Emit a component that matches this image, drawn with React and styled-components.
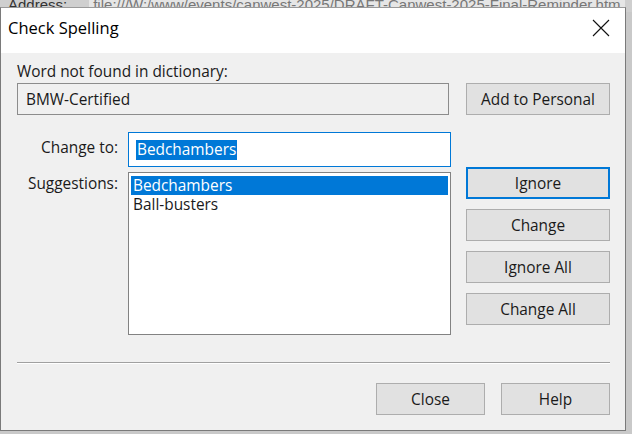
import React from "react";
import styled, { createGlobalStyle } from "styled-components";

const Global = createGlobalStyle`
  html, body { margin: 0; padding: 0; }
  body { width: 632px; height: 434px; overflow: hidden; background: #bdbdbd; font-family: "Noto Sans", "Open Sans", sans-serif; }
`;

const Desktop = styled.div`
  position: relative;
  width: 632px;
  height: 434px;
  overflow: hidden;
  background: #c9c9c9;
`;

const AddressBar = styled.div`
  display: flex;
  align-items: flex-end;
  gap: 22px;
  height: 12px;
  padding-left: 8px;
  background: #cfcfcf;
  overflow: hidden;
  font-family: "Liberation Sans", Arial, sans-serif;
  font-size: 15px;
  line-height: 15px;
  color: #333;
  white-space: nowrap;
`;

const AddressValue = styled.span`
  background: #e6e6e6;
  color: #777;
  padding: 0 4px;
`;

const Dialog = styled.div`
  position: absolute;
  left: 0;
  top: 7px;
  width: 626px;
  height: 424px;
  display: flex;
  flex-direction: column;
  background: #f0f0f0;
  border: 1px solid #7a7a7a;
  border-top-color: #9a9a9a;
  box-sizing: border-box;
  font-family: "Open Sans", "Noto Sans", sans-serif;
  font-size: 15.4px;
  color: #1a1a1a;
`;

const TitleBar = styled.div`
  display: flex;
  align-items: center;
  justify-content: space-between;
  height: 45px;
  padding: 0 15px 0 7px;
  background: #ffffff;
`;

const Title = styled.div`
  font-size: 16.5px;
  color: #000;
  padding-bottom: 6px;
`;

const CloseX = styled.svg`
  width: 18px;
  height: 18px;
  margin-bottom: 6px;
`;

const Body = styled.div`
  flex: 1;
  display: flex;
  flex-direction: column;
  padding: 10px 15px 0 16px;
`;

const Label = styled.div`
  line-height: 18px;
  color: #1a1a1a;
`;

const Row = styled.div`
  display: flex;
  align-items: ${(p) => p.$align || "center"};
  justify-content: space-between;
  margin-top: ${(p) => p.$mt || 0}px;
`;

const ReadOnlyBox = styled.div`
  width: 432px;
  height: 32px;
  box-sizing: border-box;
  border: 1px solid #8c8c8c;
  background: #f0f0f0;
  padding: 0 8px;
  display: flex;
  align-items: center;
`;

const Button = styled.div`
  width: ${(p) => p.$w || 144}px;
  height: 32px;
  box-sizing: border-box;
  display: flex;
  align-items: center;
  justify-content: center;
  background: #e1e1e1;
  border: ${(p) => (p.$focus ? "2px solid #0078d7" : "1px solid #adadad")};
  color: #1a1a1a;
`;

const FieldGroup = styled.div`
  display: grid;
  grid-template-columns: 101px 323px;
  column-gap: 10px;
  row-gap: 5px;
  align-items: start;
`;

const FieldLabel = styled.div`
  text-align: right;
  line-height: 18px;
  padding-top: ${(p) => p.$pt || 0}px;
`;

const TextInput = styled.div`
  height: 35px;
  box-sizing: border-box;
  border: 1px solid #0078d7;
  background: #fff;
  padding: 0 7px;
  display: flex;
  align-items: center;
`;

const Selected = styled.span`
  background: #0078d7;
  color: #fff;
  line-height: 20px;
  padding: 0 1px;
`;

const ListBox = styled.div`
  height: 163px;
  box-sizing: border-box;
  border: 1px solid #828282;
  background: #fff;
  padding: 3px 2px;
`;

const ListItem = styled.div`
  height: 19px;
  line-height: 19px;
  padding-left: 2px;
  background: ${(p) => (p.$sel ? "#0078d7" : "transparent")};
  color: ${(p) => (p.$sel ? "#fff" : "#1a1a1a")};
`;

const ButtonColumn = styled.div`
  display: flex;
  flex-direction: column;
  gap: 10px;
  margin-top: 35px;
`;

const Separator = styled.div`
  height: 1px;
  background: #a0a0a0;
  border-bottom: 1px solid #ffffff;
  margin-top: 27px;
`;

const Footer = styled.div`
  display: flex;
  justify-content: flex-end;
  gap: 16px;
  margin-top: 19px;
`;

export default function App() {
  return (
    <>
      <Global />
      <Desktop>
        <AddressBar>
          <span>Address:</span>
          <AddressValue>file:///W:/www/events/canwest-2025/DRAFT-Canwest-2025-Final-Reminder.htm</AddressValue>
        </AddressBar>
        <Dialog>
          <TitleBar>
            <Title>Check Spelling</Title>
            <CloseX viewBox="0 0 18 18">
              <path d="M1 1 L17 17 M17 1 L1 17" stroke="#111" strokeWidth="1.1" fill="none" />
            </CloseX>
          </TitleBar>
          <Body>
            <Label>Word not found in dictionary:</Label>
            <Row $mt={2}>
              <ReadOnlyBox>BMW-Certified</ReadOnlyBox>
              <Button>Add to Personal</Button>
            </Row>
            <Row $mt={17} $align="flex-start">
              <FieldGroup>
                <FieldLabel $pt={7}>Change to:</FieldLabel>
                <TextInput>
                  <Selected>Bedchambers</Selected>
                </TextInput>
                <FieldLabel $pt={3}>Suggestions:</FieldLabel>
                <ListBox>
                  <ListItem $sel>Bedchambers</ListItem>
                  <ListItem>Ball-busters</ListItem>
                </ListBox>
              </FieldGroup>
              <ButtonColumn>
                <Button $focus>Ignore</Button>
                <Button>Change</Button>
                <Button>Ignore All</Button>
                <Button>Change All</Button>
              </ButtonColumn>
            </Row>
            <Separator />
            <Footer>
              <Button $w={109}>Close</Button>
              <Button $w={109}>Help</Button>
            </Footer>
          </Body>
        </Dialog>
      </Desktop>
    </>
  );
}
